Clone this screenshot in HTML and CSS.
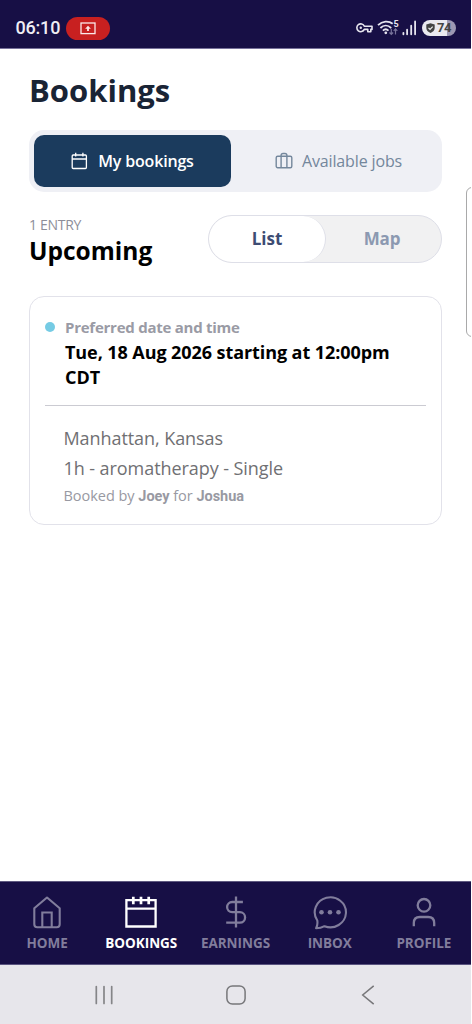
FILE: index.html
```html
<!DOCTYPE html>
<html lang="en">
<head>
<meta charset="utf-8">
<title>Bookings</title>
<link rel="stylesheet" href="styles.css">
</head>
<body>
<div class="screen">
  <header class="status">
    <span class="clock">06:10</span>
    <span class="cast">
      <svg width="16" height="13" viewBox="0 0 16 13" fill="none" stroke="#fbe9e9" stroke-width="1.3"><rect x="1" y="1" width="14" height="10.6"/><path d="M8 9V6" stroke-width="1.8"/><path d="M5.1 6.800 8 3.700l2.900 3.100z" fill="#fbe9e9" stroke="none"/></svg>
    </span>
    <span class="indicators">
      <svg class="key" width="17" height="12" viewBox="0 0 17 12" fill="none" stroke="#e6e4ee" stroke-width="1.6" stroke-linejoin="round"><path d="M8.3 4.2H16v3.2h-1.2v2.4h-3V7.4H8.3A3.9 3.9 0 1 1 8.3 4.2z"/><circle cx="4.8" cy="5.8" r="1.2" fill="#e6e4ee" stroke="none"/></svg>
      <svg class="wifi" width="22" height="16" viewBox="0 0 22 16" fill="none" stroke="#e6e4ee" stroke-width="1.8"><path d="M1 5.2C5.400 .8 11.500 .4 15.700 3.800M3.400 8C6.600 4.800 11 4.800 14.200 8M5.900 10.600C7.700 8.900 9.700 8.900 11.500 10.600"/><circle cx="8.800" cy="12.800" r="1.400" fill="#e6e4ee" stroke="none"/><path d="M14.300 8.800v5.400M12.500 12.500l1.800 1.900 1.800-1.900M18.500 14.400V9M16.700 10.800l1.800-1.900 1.800 1.900" stroke="#77729a" stroke-width="1.200"/><text x="16.600" y="6.900" class="band">5</text></svg>
      <svg class="signal" width="15" height="16" viewBox="0 0 15 16" stroke="#e6e4ee" stroke-width="1.800" stroke-linecap="round"><path d="M1.400 12.800v1.500M5.100 9.700v4.600M9.200 5.700v8.600M13.100 1.500v12.800"/></svg>
      <span class="battery"><svg width="9" height="10" viewBox="0 0 9 10"><path d="M4.500 .2 8.700 1.600V5C8.700 7.300 7 9 4.500 9.900 2 9 .3 7.300 .3 5V1.600z" fill="#444"/><path d="M2.500 4.900 4 6.300l2.700-2.700" fill="none" stroke="#eee" stroke-width="1.200"/></svg>74</span>
    </span>
  </header>

  <main class="content">
    <h1 class="title">Bookings</h1>
    <div class="tabs">
      <div class="tab tab-active">
        <svg width="17" height="18" viewBox="0 0 17 18" fill="none" stroke="#fff" stroke-width="1.300"><rect x="1.200" y="3" width="14.200" height="13.500" rx="1"/><path d="M1.200 7h14.200M4.700 .8v3.600M11.900 .8v3.600"/></svg>
        <span>My bookings</span>
      </div>
      <div class="tab">
        <svg width="18" height="18" viewBox="0 0 18 18" fill="none" stroke="#74879c" stroke-width="1.400"><rect x="1.200" y="4.200" width="15.600" height="11.600" rx="1.500"/><path d="M6.100 15.800V3.500Q6.100 1.500 8.100 1.500h1.800Q11.900 1.500 11.900 3.500v12.300"/></svg>
        <span>Available jobs</span>
      </div>
    </div>

    <section class="heading">
      <div>
        <div class="count">1 ENTRY</div>
        <h2 class="upcoming">Upcoming</h2>
      </div>
      <div class="toggle">
        <div class="option option-active">List</div>
        <div class="option">Map</div>
      </div>
    </section>

    <article class="card">
      <div class="when">
        <i class="dot"></i>
        <div>
          <div class="label">Preferred date and time</div>
          <div class="date"><span class="date-line">Tue, 18 Aug 2026 starting at 12:00pm</span> CDT</div>
        </div>
      </div>
      <div class="details">
        <div class="line">Manhattan, Kansas</div>
        <div class="line">1h - aromatherapy - Single</div>
        <div class="booked">Booked by <b>Joey</b> for <b>Joshua</b></div>
      </div>
    </article>
  </main>
  <div class="edge-handle"></div>

  <nav class="nav">
    <a class="item"><svg width="36" height="36" viewBox="0 0 36 36" fill="none" stroke="currentColor" stroke-width="2.100" stroke-linejoin="round"><path d="M5.300 14.300 18 3.500l12.700 10.800v16q0 3-3 3H8.300q-3 0-3-3z"/><path d="M13.300 33V18.500h9.400V33" stroke-linejoin="miter"/></svg><span>HOME</span></a>
    <a class="item item-active"><svg width="36" height="36" viewBox="0 0 36 36" fill="none" stroke="currentColor" stroke-width="2.300"><path d="M3.400 6.200h29.200v26.300H3.400zM3.400 14.600h29.200"/><path d="M10.300 2.700v7.600M18 2.700v7.600M25.700 2.700v7.600" stroke-width="2.700"/></svg><span>BOOKINGS</span></a>
    <a class="item"><svg width="36" height="36" viewBox="0 0 36 36" fill="none" stroke="currentColor" stroke-width="2.300"><path d="M18 2.500v31M24.900 8H14.200a5 5 0 0 0 0 10.200h7.700a5.200 5.200 0 0 1 0 10.400H8.200"/></svg><span>EARNINGS</span></a>
    <a class="item"><svg width="36" height="36" viewBox="0 0 36 36" fill="none" stroke="currentColor" stroke-width="2.100" stroke-linejoin="round"><path d="M5.300 26.500A15.600 15 0 1 1 12.500 32.200C9.800 33.700 7 34.300 4.100 34.300 5.400 31.800 5.700 29.200 5.300 26.500z"/><g fill="currentColor" stroke="none"><circle cx="9.500" cy="18.200" r="2.300"/><circle cx="18" cy="18.200" r="2.300"/><circle cx="26.500" cy="18.200" r="2.300"/></g></svg><span>INBOX</span></a>
    <a class="item"><svg width="36" height="36" viewBox="0 0 36 36" fill="none" stroke="currentColor" stroke-width="2.300"><circle cx="18" cy="11.300" r="6.300"/><path d="M7.800 32.300V29q0-6 6-6h8.400q6 0 6 6v3.300"/></svg><span>PROFILE</span></a>
  </nav>
  <footer class="system">
    <svg width="20" height="20" viewBox="0 0 20 20" stroke="#858588" stroke-width="1.700" stroke-linecap="round"><path d="M2.300 1.500v17M10 1.500v17M17.700 1.500v17"/></svg>
    <svg width="20" height="20" viewBox="0 0 20 20" fill="none" stroke="#77777a" stroke-width="1.500"><rect x=".9" y=".9" width="18.200" height="18.200" rx="5.500"/></svg>
    <svg width="20" height="20" viewBox="0 0 20 20" fill="none" stroke="#77777a" stroke-width="1.500"><path d="M15.700 .8 4.700 10l11 9.200"/></svg>
  </footer>
</div>
</body>
</html>
```
FILE: styles.css
```css
* { box-sizing: border-box; }
body { margin: 0; background: #fff; font-family: "Open Sans", "Noto Sans", sans-serif; }
svg { display: block; flex: none; }
.screen { position: relative; display: flex; flex-direction: column; width: 471px; height: 1024px; overflow: hidden; }
.status { display: flex; align-items: center; height: 49px; padding: 8px 15px 0 15.500px; background: #170f45; border-bottom: 1px solid #77719a; color: #efedf4; font-family: Roboto, sans-serif; }
.clock { width: 50px; font-size: 18px; line-height: 20px; font-weight: 500; letter-spacing: -.2px; }
.cast { display: flex; align-items: center; justify-content: center; width: 44px; height: 23px; border-radius: 12px; background: #c82020; }
.indicators { display: flex; align-items: center; margin-left: auto; }
.wifi { margin-left: 4px; }
.signal { margin-left: 3px; }
.band { fill: #e6e4ee; stroke: none; font: 700 9px Roboto, sans-serif; }
.battery { display: flex; align-items: center; gap: 2px; width: 34px; height: 16px; margin-left: 5px; padding-left: 4px; border-radius: 8px; background: linear-gradient(90deg, #eae9ef 75%, #9c98b3 75%); color: #444; font-size: 13px; line-height: 16px; font-weight: 700; letter-spacing: -.5px; }
.content { flex: 1; padding: 19px 29px 0; }
.title { margin: 0 0 18px; color: #192435; font-size: 31px; line-height: 44px; font-weight: 700; }
.tabs { display: flex; height: 62px; padding: 5px; border-radius: 15px; background: #eff0f5; }
.tab { display: flex; flex: 1; align-items: center; justify-content: center; gap: 9px; height: 52px; padding-left: 9px; border-radius: 10px; color: #74879c; font-size: 16px; line-height: 22px; letter-spacing: -.13px; }
.tab-active { flex: 0 0 197px; gap: 10px; padding-left: 0; background: #1b3b5d; color: #fff; font-weight: 600; letter-spacing: -.18px; }
.heading { display: flex; justify-content: space-between; height: 48px; margin-top: 22px; }
.count { margin-top: 1px; color: #8d8e99; font-size: 14px; line-height: 20px; letter-spacing: -.3px; }
.upcoming { margin: -1px 0 0; color: #000; font-size: 24.500px; line-height: 33px; font-weight: 700; }
.toggle { display: flex; width: 234px; height: 48px; margin-top: 1px; border: 1px solid #dedfe8; border-radius: 24px; background: #f1f1f2; overflow: hidden; }
.option { display: flex; flex: 1; align-items: center; justify-content: center; padding: 0 3px 1px 0; color: #8c99b1; font-size: 17px; font-weight: 700; letter-spacing: -.2px; }
.option-active { flex: 0 0 117px; padding-right: 0; border-right: 1px solid #dedfe8; border-radius: 23px; background: #fff; color: #3d4c73; letter-spacing: 0; }
.card { height: 229px; margin-top: 34px; padding: 20px 15px; border: 1px solid #e2e2ea; border-radius: 15px; }
.when { display: flex; height: 89px; border-bottom: 1.500px solid #cbcbd2; }
.dot { flex: none; width: 10px; height: 10px; margin: 5px 10px 0 0; border-radius: 50%; background: #75cbe4; }
.label { color: #9a9ba5; font-size: 15px; line-height: 21px; font-weight: 700; letter-spacing: -.25px; }
.date { margin-top: 2px; color: #000; font-size: 18px; line-height: 24.500px; font-weight: 700; letter-spacing: -.08px; white-space: nowrap; }
.date-line { display: block; }
.details { padding: 17px 0 0 18.500px; color: #707073; }
.line { font-size: 18px; line-height: 30px; letter-spacing: -.07px; }
.booked { color: #9899a2; font-size: 14.500px; line-height: 26px; letter-spacing: -.03px; }
.booked b { font-family: Roboto, sans-serif; font-weight: 700; }
.edge-handle { position: absolute; top: 187px; left: 466px; width: 12px; height: 150px; border: 1px solid #a9a9aa; border-radius: 6px; background: #fff; }
.nav { display: flex; height: 84px; background: #170f45; border-top: 1px solid #5f5a80; border-bottom: 1px solid #5a5480; }
.item { display: flex; flex: 1 0 0; flex-direction: column; align-items: center; padding-top: 12px; color: #817d9c; font-size: 13.500px; line-height: 20px; font-weight: 700; letter-spacing: -.03px; }
.item span { margin-top: 3px; }
.item-active { color: #fff; }
.system { display: flex; align-items: center; justify-content: space-between; height: 59px; padding: 1px 93px 0 94px; background: #e7e6eb; }
```
